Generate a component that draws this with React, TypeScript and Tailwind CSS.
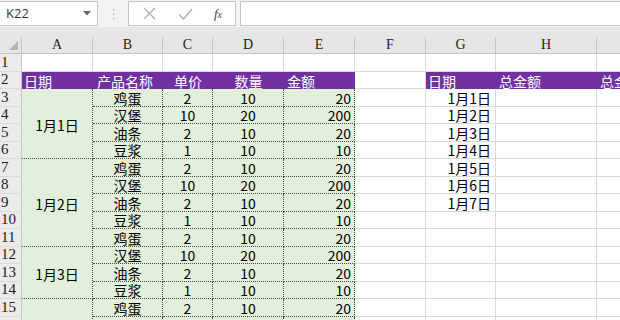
import React from "react";

type Row = { n: number; b: string; c: string; d: string; e: string };

const data: Row[] = [
  { n: 3, b: "鸡蛋", c: "2", d: "10", e: "20" },
  { n: 4, b: "汉堡", c: "10", d: "20", e: "200" },
  { n: 5, b: "油条", c: "2", d: "10", e: "20" },
  { n: 6, b: "豆浆", c: "1", d: "10", e: "10" },
  { n: 7, b: "鸡蛋", c: "2", d: "10", e: "20" },
  { n: 8, b: "汉堡", c: "10", d: "20", e: "200" },
  { n: 9, b: "油条", c: "2", d: "10", e: "20" },
  { n: 10, b: "豆浆", c: "1", d: "10", e: "10" },
  { n: 11, b: "鸡蛋", c: "2", d: "10", e: "20" },
  { n: 12, b: "汉堡", c: "10", d: "20", e: "200" },
  { n: 13, b: "油条", c: "2", d: "10", e: "20" },
  { n: 14, b: "豆浆", c: "1", d: "10", e: "10" },
  { n: 15, b: "鸡蛋", c: "2", d: "10", e: "20" },
  { n: 16, b: "汉堡", c: "10", d: "20", e: "200" },
];

const merged: Record<number, { label: string; span: string }> = {
  3: { label: "1月1日", span: "row-span-4" },
  7: { label: "1月2日", span: "row-span-5" },
  12: { label: "1月3日", span: "row-span-3" },
  15: { label: "", span: "row-span-2" },
};

const gDates: Record<number, string> = {
  3: "1月1日",
  4: "1月2日",
  5: "1月3日",
  6: "1月4日",
  7: "1月5日",
  8: "1月6日",
  9: "1月7日",
};

const rowHdr =
  "bg-[#ebebeb] border-r border-b border-r-[#c4c4c4] border-b-[#dadada] text-[15px] leading-[17px] pl-[1px] text-[#222] flex items-end font-['Liberation_Serif',serif]";
const white = "bg-white border-r border-b border-[#dadada]";
const green =
  "bg-[#e2efda] border-r border-b border-dotted border-[#4a4a4a] flex items-end text-[14px] leading-[16px] text-black";
const purple =
  "bg-[#7030a0] text-white text-[14px] leading-[16px] flex items-end";

function RowHeader({ n }: { n: number }) {
  return <div className={rowHdr}>{n}</div>;
}

export default function App() {
  const cols = ["A", "B", "C", "D", "E", "F", "G", "H", "I"];
  return (
    <div className="w-[620px] h-[320px] overflow-hidden bg-white font-['Noto_Sans_CJK_SC',sans-serif]">
      {/* formula bar */}
      <div className="h-[27px] bg-[#f3f3f3] flex items-stretch py-[1px]">
        <div className="w-[98px] bg-white border border-l-0 border-[#c6c6c6] flex items-center justify-between pl-[6px] pr-[6px]">
          <span className="text-[13px] text-[#333] font-['Open_Sans',sans-serif]">K22</span>
          <svg width="8" height="5" viewBox="0 0 8 5">
            <path d="M0 0 L8 0 L4 4.5 Z" fill="#666" />
          </svg>
        </div>
        <div className="w-[30px] flex items-center justify-center">
          <svg width="3" height="12" viewBox="0 0 3 12">
            <rect x="1" y="1" width="1.2" height="1.2" fill="#9a9a9a" />
            <rect x="1" y="5.5" width="1.2" height="1.2" fill="#9a9a9a" />
            <rect x="1" y="10" width="1.2" height="1.2" fill="#9a9a9a" />
          </svg>
        </div>
        <div className="w-[108px] bg-white border border-[#c6c6c6] flex items-center">
          <div className="w-[38px] flex justify-center pl-[2px]">
            <svg width="13" height="13" viewBox="0 0 13 13">
              <path d="M1 1 L12 12 M12 1 L1 12" stroke="#ababab" strokeWidth="1.2" fill="none" />
            </svg>
          </div>
          <div className="w-[36px] flex justify-center">
            <svg width="15" height="12" viewBox="0 0 15 12">
              <path d="M1 6.5 L5.5 11 L14 1" stroke="#ababab" strokeWidth="1.3" fill="none" />
            </svg>
          </div>
          <div className="w-[30px] flex justify-center">
            <span className="italic text-[13px] text-[#444] font-['Liberation_Serif',serif] leading-none">
              f<span className="text-[10px]">x</span>
            </span>
          </div>
        </div>
        <div className="ml-[4px] flex-1 bg-white border border-r-0 border-[#c6c6c6]" />
      </div>
      <div className="h-[10px] bg-[#e6e6e6]" />
      {/* grid */}
      <div className="w-[680px] grid grid-cols-[22px_71px_70px_50px_71px_71px_71px_70px_101px_83px] grid-rows-[17px_18px_17px_18px_17px_18px_17px_18px_17px_18px_17px_18px_17px_18px_17px_18px_18px]">
        {/* column header row */}
        <div className="bg-[#e6e6e6] border-r border-b border-[#c4c4c4] flex items-end justify-end pr-[3px] pb-[3px]">
          <svg width="9" height="9" viewBox="0 0 9 9">
            <path d="M9 0 L9 9 L0 9 Z" fill="#b5b5b5" />
          </svg>
        </div>
        {cols.map((c) => (
          <div
            key={c}
            className="bg-[#e6e6e6] border-r border-b border-[#c4c4c4] flex items-end justify-center text-[14px] leading-[16px] text-[#222] font-['Liberation_Serif',serif]"
          >
            {c}
          </div>
        ))}
        {/* row 1 */}
        <RowHeader n={1} />
        {cols.map((c) => (
          <div key={"r1" + c} className={white} />
        ))}
        {/* row 2 */}
        <RowHeader n={2} />
        <div className={purple + " pl-[2px]"}>日期</div>
        <div className={purple + " pl-[4px]"}>产品名称</div>
        <div className={purple + " justify-center"}>单价</div>
        <div className={purple + " justify-center"}>数量</div>
        <div className={purple + " pl-[3px]"}>金额</div>
        <div className={white} />
        <div className={purple + " pl-[2px]"}>日期</div>
        <div className={purple + " pl-[3px]"}>总金额</div>
        <div className={purple + " pl-[3px] whitespace-nowrap"}>总金额</div>
        {/* data rows */}
        {data.map((r) => (
          <React.Fragment key={r.n}>
            <RowHeader n={r.n} />
            {merged[r.n] ? (
              <div
                className={
                  "bg-[#e2efda] border-r border-b border-dotted border-[#4a4a4a] flex items-center justify-center text-[14px] leading-[16px] text-black pt-[2px] " +
                  merged[r.n].span
                }
              >
                {merged[r.n].label}
              </div>
            ) : null}
            <div className={green + " justify-center"}>{r.b}</div>
            <div className={green + " justify-center"}>{r.c}</div>
            <div className={green + " justify-center"}>{r.d}</div>
            <div className={green + " justify-end pr-[3px]"}>{r.e}</div>
            <div className={white} />
            <div className={white + " flex items-end justify-end pr-[4px] text-[14px] leading-[16px] text-black"}>
              {gDates[r.n] ?? ""}
            </div>
            <div className={white} />
            <div className={white} />
          </React.Fragment>
        ))}
      </div>
    </div>
  );
}
